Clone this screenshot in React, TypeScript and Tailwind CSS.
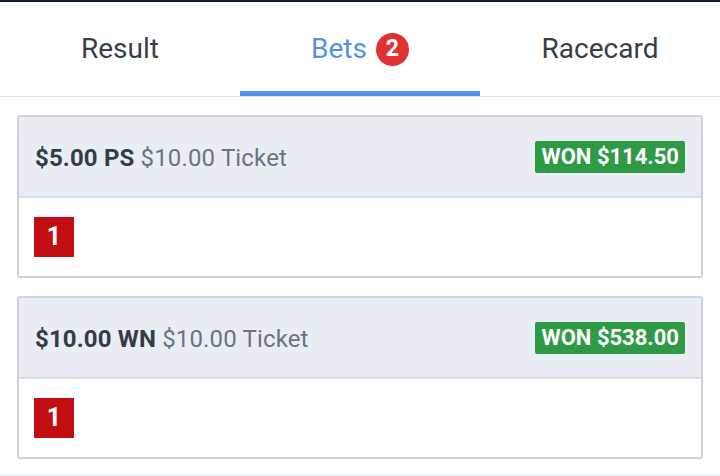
import React from "react";

const font = { fontFamily: "Roboto, 'Liberation Sans', sans-serif" };

type Bet = { stake: string; type: string; ticket: string; won: string; runner: string };

const bets: Bet[] = [
  { stake: "$5.00", type: "PS", ticket: "$10.00", won: "$114.50", runner: "1" },
  { stake: "$10.00", type: "WN", ticket: "$10.00", won: "$538.00", runner: "1" },
];

const BetCard: React.FC<{ bet: Bet }> = ({ bet }) => (
  <div className="mx-[17px] border-2 border-[#cfd3d9] rounded-[3px] overflow-hidden bg-white">
    <div className="h-[81px] bg-[#e9eef5] border-b-2 border-[#d6e1ee] flex items-center justify-between pl-4 pr-4">
      <div className="text-[24px] leading-none tracking-[0.15px] pt-[2px]">
        <span className="font-bold text-[#343c46]">
          {bet.stake} {bet.type}
        </span>{" "}
        <span className="text-[#6b7480]">{bet.ticket} Ticket</span>
      </div>
      <span className="bg-[#2f9a45] text-white font-bold text-[22px] leading-none px-[6px] h-[32px] flex items-center rounded-[2px]">
        WON {bet.won}
      </span>
    </div>
    <div className="h-[78px] flex items-center pl-[15px]">
      <span className="w-10 h-10 bg-[#c20e12] text-white font-bold text-[25px] flex items-center justify-center">
        {bet.runner}
      </span>
    </div>
  </div>
);

const App: React.FC = () => {
  return (
    <div className="w-[720px] h-[476px] bg-white overflow-hidden" style={font}>
      <div className="h-[2px] bg-[#0d1b2e]" />
      {/* Tabs */}
      <div className="grid grid-cols-3 h-[95px] border-b-[1.5px] border-[#d8e2ee]">
        <div className="flex items-center justify-center text-[28px] text-[#363f49]">Result</div>
        <div className="relative flex items-center justify-center text-[28px] text-[#5392ea]">
          <span>Bets</span>
          <span className="ml-[9px] w-[33px] h-[33px] rounded-full bg-[#e03233] text-white font-bold text-[23px] flex items-center justify-center">
            2
          </span>
          <div className="absolute left-0 right-0 bottom-0 h-[5px] bg-[#5392ea]" />
        </div>
        <div className="flex items-center justify-center text-[28px] text-[#363f49]">Racecard</div>
      </div>
      <div className="pt-[18px] flex flex-col gap-[18px]">
        {bets.map((b, i) => (
          <BetCard key={i} bet={b} />
        ))}
        <div className="h-[4px] bg-[#dce6f2] mt-[-2px]" />
      </div>
    </div>
  );
};

export default App;
